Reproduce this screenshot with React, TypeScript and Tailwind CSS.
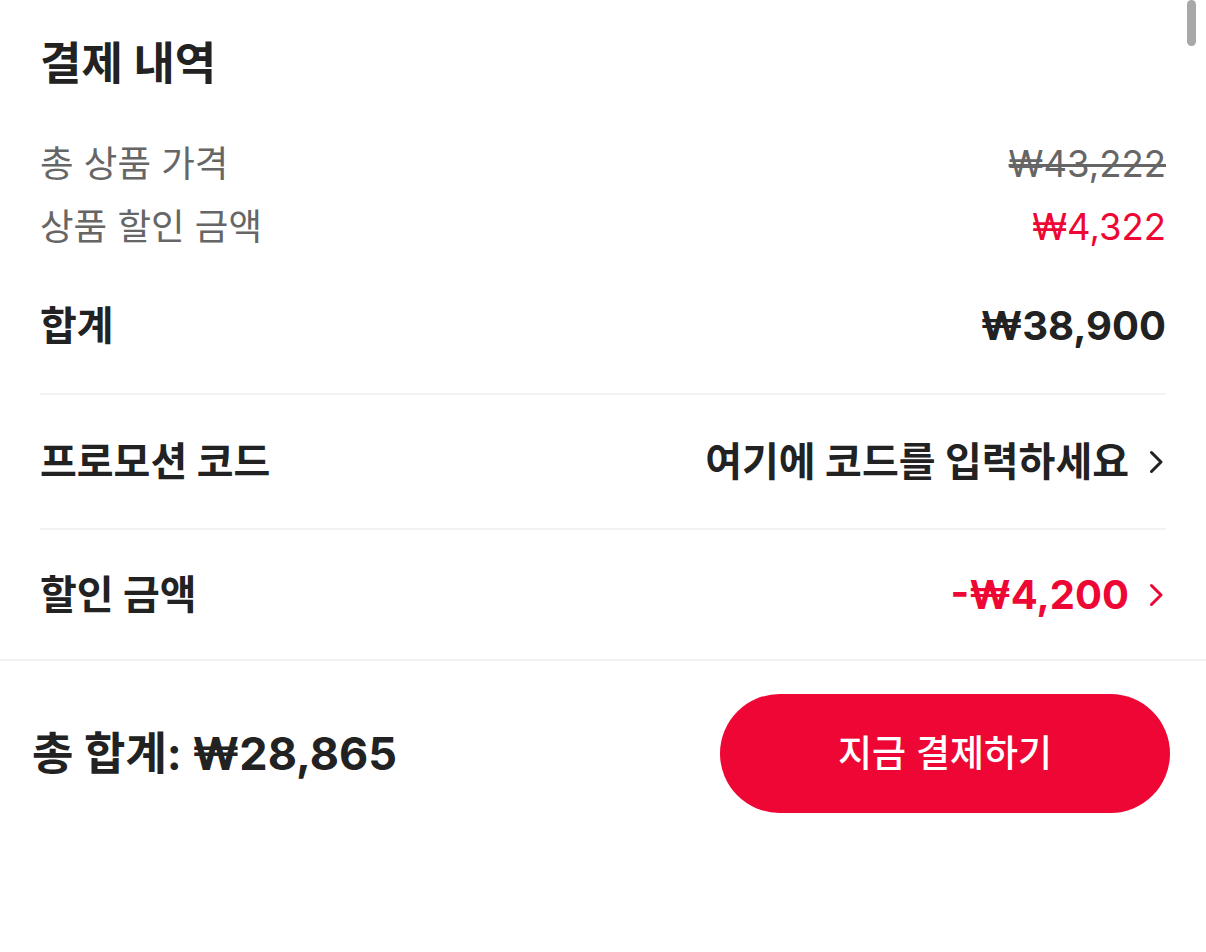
import React from "react";

const Chevron = ({ color }: { color: string }) => (
  <svg width="16" height="24" viewBox="0 0 16 24" fill="none" className="shrink-0">
    <path d="M1.5 2.5 L11 12 L1.5 21.5" stroke={color} strokeWidth="3" strokeLinecap="round" strokeLinejoin="round" />
  </svg>
);

export default function App() {
  return (
    <div
      className="relative w-[1206px] h-[952px] bg-white overflow-hidden text-[#222222]"
      style={{ fontFamily: 'Inter, "Noto Sans CJK KR", sans-serif' }}
    >
      <div className="absolute right-[10px] top-0 w-[9px] h-[46px] rounded-full bg-[#a8a8a8]" />

      <div className="px-10">
        <div className="pt-[38px]">
          <h1 className="text-[45px] leading-[52px] font-bold">결제 내역</h1>
        </div>

        <div className="mt-[43px]">
          <div className="h-[63px] flex items-center justify-between text-[36.5px] text-[#666666]">
            <span>총 상품 가격</span>
            <span className="line-through decoration-[3px]">₩43,222</span>
          </div>
          <div className="h-[63px] flex items-center justify-between text-[36.5px] text-[#666666]">
            <span>상품 할인 금액</span>
            <span className="text-[#ee0735]">₩4,322</span>
          </div>
        </div>

        <div className="h-[134px] flex items-center justify-between text-[40px] font-bold">
          <span>합계</span>
          <span>₩38,900</span>
        </div>

        <div className="h-[2px] bg-[#f2f2f2]" />

        <div className="h-[133px] flex items-center justify-between text-[40px] font-bold">
          <span>프로모션 코드</span>
          <span className="flex items-center gap-[21px]">
            <span>여기에 코드를 입력하세요</span>
            <Chevron color="#222222" />
          </span>
        </div>

        <div className="h-[2px] bg-[#f2f2f2]" />

        <div className="h-[129px] flex items-center justify-between text-[40px] font-bold">
          <span>할인 금액</span>
          <span className="flex items-center gap-[21px] text-[#ee0735]">
            <span>-₩4,200</span>
            <Chevron color="#ee0735" />
          </span>
        </div>
      </div>

      <div className="h-[2px] bg-[#f2f2f2]" />

      <div className="pl-[32px] pr-[36px] pt-[33px] flex items-center justify-between">
        <span className="text-[45px] font-bold">총 합계: ₩28,865</span>
        <button className="w-[450px] h-[119px] rounded-[60px] bg-[#ee0735] text-white text-[37px] font-medium flex items-center justify-center">
          지금 결제하기
        </button>
      </div>
    </div>
  );
}
